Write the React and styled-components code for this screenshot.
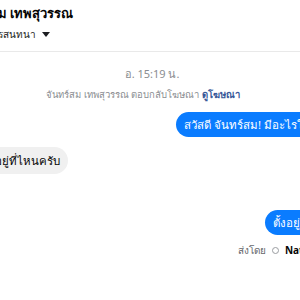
import React from 'react';
import styled, { createGlobalStyle } from 'styled-components';

const GlobalStyle = createGlobalStyle`
  html, body {
    margin: 0;
    padding: 0;
    background: #ffffff;
    overflow: hidden;
  }
  body {
    font-family: "Noto Sans", "DejaVu Sans", sans-serif;
    color: #050505;
  }
`;

const Panel = styled.div`
  width: 504px;
  margin-left: -100px;
  display: flex;
  flex-direction: column;
`;

const Header = styled.div`
  height: 52px;
  box-sizing: border-box;
  border-bottom: 1px solid #e9e9e9;
  padding: 4px 0 0 57px;
  display: flex;
  flex-direction: column;
`;

const Name = styled.div`
  font-size: 13px;
  font-weight: 700;
  line-height: 19px;
`;

const Sub = styled.div`
  display: flex;
  align-items: center;
  gap: 6px;
  font-size: 10px;
  line-height: 18px;
  color: #1c1e21;
  margin-top: 2px;
`;

const Caret = styled.span`
  width: 0;
  height: 0;
  border-left: 4px solid transparent;
  border-right: 4px solid transparent;
  border-top: 5px solid #1c1e21;
`;

const Thread = styled.div`
  display: flex;
  flex-direction: column;
  padding: 12px 12px 0;
`;

const SystemLine = styled.div`
  text-align: center;
  font-size: ${(p) => p.$size || 11}px;
  line-height: 16px;
  color: #8a8d91;
  margin-top: ${(p) => p.$top || 0}px;
  padding-right: ${(p) => p.$shift || 0}px;
`;

const Link = styled.span`
  color: #385898;
  font-weight: 700;
`;

const Row = styled.div`
  display: flex;
  justify-content: ${(p) => (p.$out ? 'flex-end' : 'flex-start')};
  margin-top: ${(p) => p.$top || 0}px;
  padding-left: ${(p) => p.$indent || 0}px;
`;

const Bubble = styled.div`
  font-size: 11.5px;
  line-height: 17px;
  padding: ${(p) => (p.$out ? '4px 8px' : '5px 8px')};
  border-radius: 14px;
  background: ${(p) => (p.$out ? '#0a7cff' : '#f0f0f0')};
  color: ${(p) => (p.$out ? '#ffffff' : '#050505')};
  white-space: nowrap;
`;

const Receipt = styled.div`
  display: flex;
  justify-content: flex-end;
  align-items: center;
  gap: 6px;
  font-size: 10px;
  line-height: 14px;
  color: #65676b;
  margin-top: 8px;
`;

const Dot = styled.span`
  width: 7px;
  height: 7px;
  border-radius: 50%;
  border: 1px solid #9a9da1;
  box-sizing: border-box;
`;

const Sender = styled.b`
  color: #050505;
`;

export default function App() {
  return (
    <>
      <GlobalStyle />
      <Panel>
        <Header>
          <Name>จันทร์สม เทพสุวรรณ</Name>
          <Sub>
            จัดการการสนทนา <Caret />
          </Sub>
        </Header>
        <Thread>
          <SystemLine $top={2}>อ. 15:19 น.</SystemLine>
          <SystemLine $top={5} $shift={18} $size={9.5}>
            จันทร์สม เทพสุวรรณ ตอบกลับโฆษณา <Link>ดูโฆษณา</Link>
          </SystemLine>
          <Row $out $top={9}>
            <Bubble $out>สวัสดี จันทร์สม! มีอะไรให้เราช่วยไหมคะ</Bubble>
          </Row>
          <Row $top={10} $indent={42}>
            <Bubble>ร้านตั้งอยู่ที่ไหนครับ</Bubble>
          </Row>
          <Row $out $top={36}>
            <Bubble $out>ตั้งอยู่ที่สยามสแควร์ค่ะ</Bubble>
          </Row>
          <Receipt>
            ส่งโดย <Dot /> <Sender>Nattaya Srisuwannee</Sender>
          </Receipt>
        </Thread>
      </Panel>
    </>
  );
}
